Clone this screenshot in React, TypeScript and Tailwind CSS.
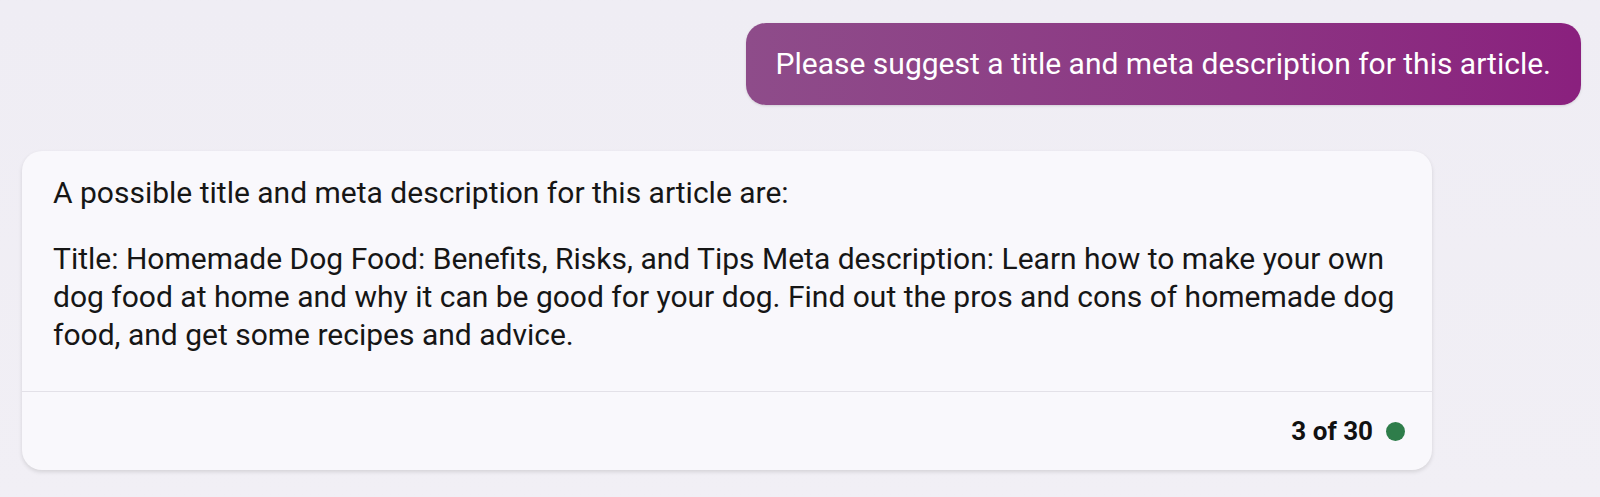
export default function App() {
    return (
        <div className="w-full h-[497px] bg-gradient-to-b from-[#efedf4] to-[#f1eff5] font-['Roboto',sans-serif] pt-[23px] flex flex-col">
            {/*--User message--*/}
            <div className="flex justify-end pr-[19px]">
                <div className="px-[30px] py-[22px] rounded-[20px] bg-gradient-to-r from-[#8e4c8a] to-[#8a207e] text-white text-[30px] leading-[38px] shadow-sm">
                    Please suggest a title and meta description for this article.
                </div>
            </div>

            {/*--Assistant response--*/}
            <div className="ml-[22px] mt-[46px] w-[1410px] rounded-[20px] bg-[#f9f8fc] shadow-[0_2px_4px_rgba(0,0,0,0.12)] text-[#161616]">
                <div className="pl-[31px] pr-[36px] pt-[23px] pb-[37px] text-[30px] leading-[38px]">
                    <p>A possible title and meta description for this article are:</p>
                    <p className="mt-[28px]">
                        Title: Homemade Dog Food: Benefits, Risks, and Tips Meta description: Learn how to make your own dog food at home and why it can be good for your dog. Find out the pros and cons of homemade dog food, and get some recipes and advice.
                    </p>
                </div>
                <div className="border-t border-[#e3e1e8] h-[79px] flex items-center justify-end gap-[13px] pr-[27px]">
                    <span className="text-[26px] font-bold text-[#111]">3 of 30</span>
                    <span className="w-[19px] h-[19px] rounded-full bg-[#2e7d4a]"></span>
                </div>
            </div>
        </div>
    )
}
